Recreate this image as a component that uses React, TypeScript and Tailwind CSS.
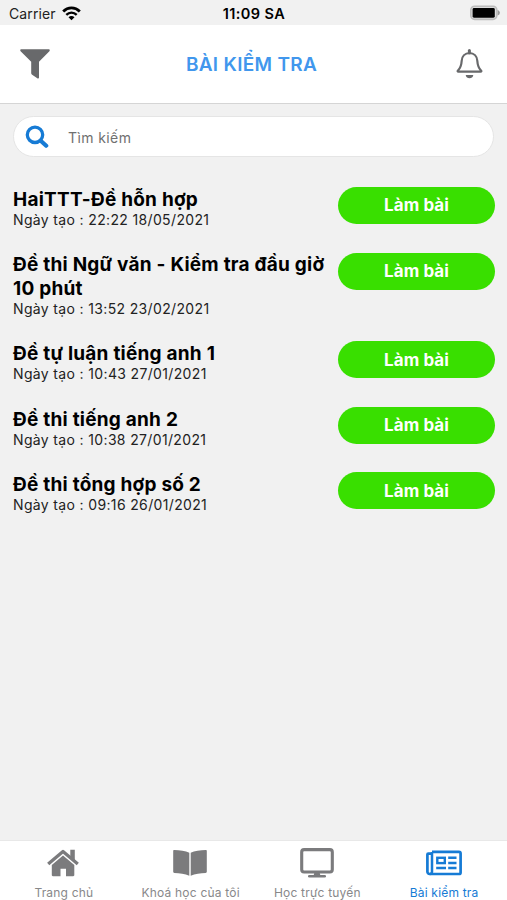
const exams = [
  { title: "HaiTTT-Đề hỗn hợp", date: "22:22 18/05/2021" },
  { title: "Đề thi Ngữ văn - Kiểm tra đầu giờ 10 phút", date: "13:52 23/02/2021" },
  { title: "Đề tự luận tiếng anh 1", date: "10:43 27/01/2021" },
  { title: "Đề thi tiếng anh 2", date: "10:38 27/01/2021" },
  { title: "Đề thi tổng hợp số 2", date: "09:16 26/01/2021" },
];

function WifiIcon() {
  return (
    <svg width="19" height="15" viewBox="0 0 19 15" fill="none">
      <path d="M1.2 5.4C5.9.7 13.1.7 17.8 5.4" stroke="#000" strokeWidth="2.8" />
      <path d="M4.3 8.8c3-2.9 7.4-2.9 10.4 0" stroke="#000" strokeWidth="2.4" />
      <path d="M6.5 11.2c1.8-1.5 4.2-1.5 6 0L9.5 14.2z" fill="#000" />
    </svg>
  );
}

function BatteryIcon() {
  return (
    <svg width="32" height="16" viewBox="0 0 32 16">
      <rect x="1.8" y="1.2" width="26" height="13.2" rx="3.8" fill="#dcdcdc" stroke="#bcbcbc" strokeWidth="1.6" />
      <rect x="3.6" y="3" width="22.2" height="9.7" rx="1.4" fill="#000" />
      <path d="M28.6 5c3 1.2 3 4.4 0 5.6z" fill="#999" />
    </svg>
  );
}

function FilterIcon() {
  return (
    <svg width="30" height="30" viewBox="0 0 30 30" fill="#68696b">
      <path d="M1.3.3h27.4c1 0 1.4 1.2.7 1.9L19 12.7v15.7c0 .9-1 1.4-1.7.9l-5.5-3.9c-.4-.3-.6-.7-.6-1.1V12.7L.6 2.2C-.1 1.5.3.3 1.3.3z" />
    </svg>
  );
}

function BellIcon() {
  return (
    <svg width="27" height="30" viewBox="0 0 27 30" fill="none" stroke="#68696b">
      <path d="M13.4 1.6v2.3" strokeWidth="3" strokeLinecap="round" />
      <path d="M13.5 4c-4.5 0-7.5 3.3-7.8 7.7-.3 4.8-1 7.2-3.9 10-.4.5-.2 1 .5 1h22.4c.7 0 .9-.5.5-1-2.9-2.8-3.6-5.2-3.9-10C21 7.3 18 4 13.5 4z" strokeWidth="2.2" strokeLinejoin="round" />
      <path d="M9.7 26h7.6c-.4 4.3-7.2 4.3-7.6 0z" fill="#68696b" stroke="none" />
    </svg>
  );
}

function SearchIcon() {
  return (
    <svg width="24" height="24" viewBox="0 0 24 24" fill="none" stroke="#167bd5">
      <circle cx="10" cy="9.8" r="7.7" strokeWidth="3.3" />
      <path d="m15.7 15.7 5.5 5" strokeWidth="4.2" strokeLinecap="round" />
    </svg>
  );
}

function HomeIcon() {
  return (
    <svg width="34" height="28" viewBox="0 0 34 28" fill="#7b7b7d">
      <path d="M2.2 15 17 2.4 31.800 15" fill="none" stroke="#7b7b7d" strokeWidth="3.3" strokeLinejoin="round" />
      <path d="M24.300.700h4.500v11.500l-4.500-4z" />
      <path d="M17 6.500 28.300 16v10.100c0 .7-.4 1.100-1.100 1.100h-7.200v-7.500h-5.500v7.500H6.900c-.7 0-1.100-.4-1.100-1.100V16z" />
    </svg>
  );
}

function BookIcon() {
  return (
    <svg width="34" height="28" viewBox="0 0 34 28" fill="#7b7b7d">
      <path d="M1.2 1C6.800 1 12.500 1.800 16.300 3.800v23C12 24.600 6.500 24.200 1.400 23.900.7 23.800.2 23.400.2 22.700V2c0-.7.4-1 1-1z" />
      <path d="M32.800 1C27.200 1 21.500 1.800 17.700 3.800v23c4.300-2.200 9.800-2.600 14.900-2.900.7-.1 1.200-.5 1.200-1.200V2c0-.7-.4-1-1-1z" />
    </svg>
  );
}

function MonitorIcon() {
  return (
    <svg width="34" height="30" viewBox="0 0 34 30" fill="none" stroke="#7b7b7d">
      <rect x="1.7" y="1.6" width="30.6" height="22.4" rx="2.4" strokeWidth="3.1" />
      <path d="M14.500 24h5l1 4h-7z" fill="#7b7b7d" stroke="none" />
      <path d="M9.300 28.300h15.400" strokeWidth="2.6" strokeLinecap="round" />
    </svg>
  );
}

function NewsIcon() {
  return (
    <svg width="36" height="26" viewBox="0 0 36 26" fill="none" stroke="#167bd5">
      <path d="M6 1.8h27c1 0 1.600.6 1.600 1.600v19c0 1-.6 1.600-1.600 1.600H3.700c-1.300 0-2.300-1-2.300-2.200V4.500c0-.6.3-.9.9-.9H6" strokeWidth="2.7" strokeLinejoin="round" />
      <path d="M6 2v19.700c0 1.300-.9 2.300-2.200 2.300" strokeWidth="2.5" />
      <rect x="11.300" y="7.800" width="7.500" height="5.300" strokeWidth="2.4" />
      <path d="M10.200 18h9.800M22.200 7.800H30.500M22.200 13H30.500M22.200 18H30.500" strokeWidth="2.5" />
    </svg>
  );
}

const tabs = [
  { label: "Trang chủ", icon: <HomeIcon />, active: false },
  { label: "Khoá học của tôi", icon: <BookIcon />, active: false },
  { label: "Học trực tuyến", icon: <MonitorIcon />, active: false },
  { label: "Bài kiểm tra", icon: <NewsIcon />, active: true },
];

export default function App() {
  return (
    <div className="flex h-[900px] w-[507px] flex-col overflow-hidden bg-[#f1f1f1] font-['Inter','Noto_Sans',sans-serif] text-black">
      <div className="grid h-[25px] shrink-0 grid-cols-3 items-center pt-[1px] pr-[6px] pl-[9px]">
        <div className="flex items-center gap-[6px]">
          <span className="pt-[1px] text-[14px] tracking-[0.1px] text-[#222]">Carrier</span>
          <WifiIcon />
        </div>
        <div className="pt-[1px] pr-[2px] text-center text-[14.5px] font-semibold tracking-[0.4px]">11:09 SA</div>
        <div className="flex justify-end">
          <BatteryIcon />
        </div>
      </div>

      <header className="flex h-[79px] shrink-0 items-center justify-between border-b border-[#d5d5d5] bg-white pr-[24px] pl-[20px]">
        <FilterIcon />
        <h1 className="pt-[2px] pr-[3px] text-[19px] font-semibold tracking-[0.3px] text-[#4197ed]">BÀI KIỂM TRA</h1>
        <BellIcon />
      </header>

      <main className="flex-1 px-[13px] pt-[12px]">
        <div className="flex h-[41px] items-center rounded-full border border-[#e5e5e5] bg-white pl-[11px]">
          <SearchIcon />
          <span className="pt-[2px] pl-[19px] text-[14px] tracking-[0.4px] text-[#707070]">Tìm kiếm</span>
        </div>

        <ul className="mt-[30px] flex flex-col gap-[24px]">
          {exams.map((exam) => (
            <li key={exam.title} className="flex items-start">
              <div className="w-[325px] shrink-0 pt-[0.6px]">
                <h2 className="text-[19px] leading-[23.4px] font-bold tracking-[0.23px]">{exam.title}</h2>
                <p className="text-[14px] leading-[17.5px] tracking-[0.35px] text-[#222]">Ngày tạo : {exam.date}</p>
              </div>
              <button className="h-[37px] w-[157px] shrink-0 rounded-full bg-[#39df00] pt-[1px] text-[17px] font-bold tracking-[0.1px] text-white">
                Làm bài
              </button>
            </li>
          ))}
        </ul>
      </main>

      <nav className="grid h-[60px] shrink-0 grid-cols-4 border-t border-[#e8e8e8] bg-white">
        {tabs.map((tab) => (
          <div key={tab.label} className={tab.active ? "flex flex-col items-center text-[#167bd5]" : "flex flex-col items-center text-[#88888a]"}>
            <div className="flex h-[43px] items-center">{tab.icon}</div>
            <span className="pt-[1px] pl-[1px] text-[12px] leading-[16px] tracking-[0.2px] whitespace-nowrap">{tab.label}</span>
          </div>
        ))}
      </nav>
    </div>
  );
}
